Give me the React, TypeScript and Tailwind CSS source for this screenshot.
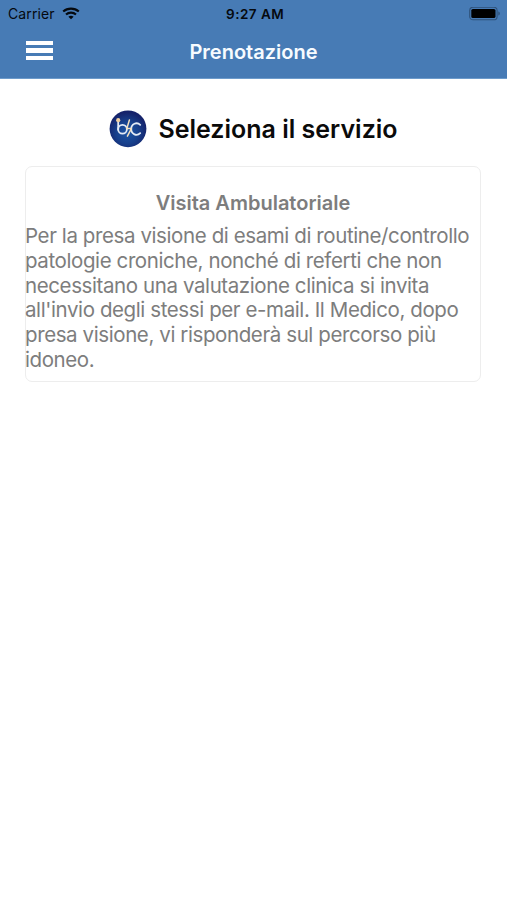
const descriptionLines = [
  'Per la presa visione di esami di routine/controllo',
  'patologie croniche, nonché di referti che non',
  'necessitano una valutazione clinica si invita',
  "all'invio degli stessi per e-mail. Il Medico, dopo",
  'presa visione, vi risponderà sul percorso più',
  'idoneo.',
]

const WifiIcon = () => (
  <svg width="18" height="13" viewBox="0 0 18 13" fill="none" stroke="#05090e" strokeWidth="2.1">
    <path d="M1.2 4.6C5.5 .6 12.5 .6 16.8 4.6" />
    <path d="M4 7.6C6.8 5 11.2 5 14 7.6" />
    <path d="M9 12.3 6.4 9.7C7.8 8.4 10.2 8.4 11.6 9.7Z" fill="#05090e" stroke="none" />
  </svg>
)

const BatteryIcon = () => (
  <svg width="32" height="14" viewBox="0 0 32 14">
    <rect x=".7" y=".2" width="27.4" height="12.6" rx="3.4" fill="none" stroke="#2f527a" strokeWidth="1.1" />
    <rect x="2.3" y="1.9" width="24.2" height="9.2" rx="1.6" fill="#000" />
    <path d="M29.3 4.4c2 .6 2 3.4 0 4z" fill="#2f527a" />
  </svg>
)

const Logo = () => (
  <svg width="38" height="38" viewBox="0 0 38 38" fill="none">
    <defs>
      <radialGradient id="logoBg" cx=".48" cy=".6" r=".55">
        <stop offset="0%" stopColor="#1c55a5" />
        <stop offset="55%" stopColor="#17408c" />
        <stop offset="100%" stopColor="#15226a" />
      </radialGradient>
    </defs>
    <circle cx="19" cy="18.8" r="18.4" fill="url(#logoBg)" />
    <g stroke="#e3eaf5" strokeWidth="1.8" strokeLinecap="round">
      <path d="M9.2 11.5v8" />
      <circle cx="13.5" cy="19.3" r="4.4" />
      <path d="M31.2 14.8c-3.4-3.2-9-1-9 4.3s5.6 7.4 9 4.1" />
    </g>
    <path d="M20.4 10 17.8 18.6h4.6l-4 7.6" stroke="#f3dfbd" strokeWidth="1.5" strokeLinejoin="round" strokeLinecap="round" />
    <circle cx="9.2" cy="10.2" r="2.1" fill="#f0cfa0" />
  </svg>
)

const StatusBar = () => (
  <div className="relative h-[27px] flex items-center justify-between pl-[8px] pr-[6px] text-[#05090e]">
    <div className="flex items-center gap-[7px]">
      <span className="text-[14px] leading-[20px] tracking-[0.1px]">Carrier</span>
      <WifiIcon />
    </div>
    <span className="absolute left-[226px] text-[13.5px] leading-[20px] tracking-[0.5px] font-semibold whitespace-nowrap">9:27 AM</span>
    <BatteryIcon />
  </div>
)

const Header = () => (
  <header className="h-[79px] bg-[#477bb5] border-b border-[#6d9bcb]">
    <StatusBar />
    <div className="grid grid-cols-[1fr_auto_1fr] items-center h-[50px]">
      <button aria-label="Menu" className="ml-[26px] mb-[3px] w-[27px] flex flex-col gap-[3px]">
        <span className="h-[4.5px] bg-white" />
        <span className="h-[4.5px] bg-white" />
        <span className="h-[4.5px] bg-white" />
      </button>
      <h1 className="text-[20px] leading-[26px] font-semibold text-[#f7fbff]">Prenotazione</h1>
    </div>
  </header>
)

const ServiceCard = () => (
  <div className="ml-[25px] mr-[26px] mt-[18px] h-[216px] border border-[#ededed] rounded-[7px] pt-[22px] text-[#7d7d7d]">
    <h3 className="text-center text-[20px] leading-[28px] font-semibold">Visita Ambulatoriale</h3>
    <p className="-ml-px mt-[7px] text-[20.5px] leading-[24.8px] tracking-[-0.4px] whitespace-nowrap">
      {descriptionLines.map((line) => (
        <span key={line} className="block">{line}</span>
      ))}
    </p>
  </div>
)

const App = () => {
  return (
    <div className="h-[900px] w-[507px] overflow-hidden bg-white font-['Inter','Liberation_Sans',sans-serif]">
      <Header />
      <div className="flex items-center justify-center gap-[11px] mt-[30px] h-[39px]">
        <Logo />
        <h2 className="text-[25px] leading-[32px] font-semibold text-[#0a0a0a]">Seleziona il servizio</h2>
      </div>
      <ServiceCard />
    </div>
  )
}

export default App
